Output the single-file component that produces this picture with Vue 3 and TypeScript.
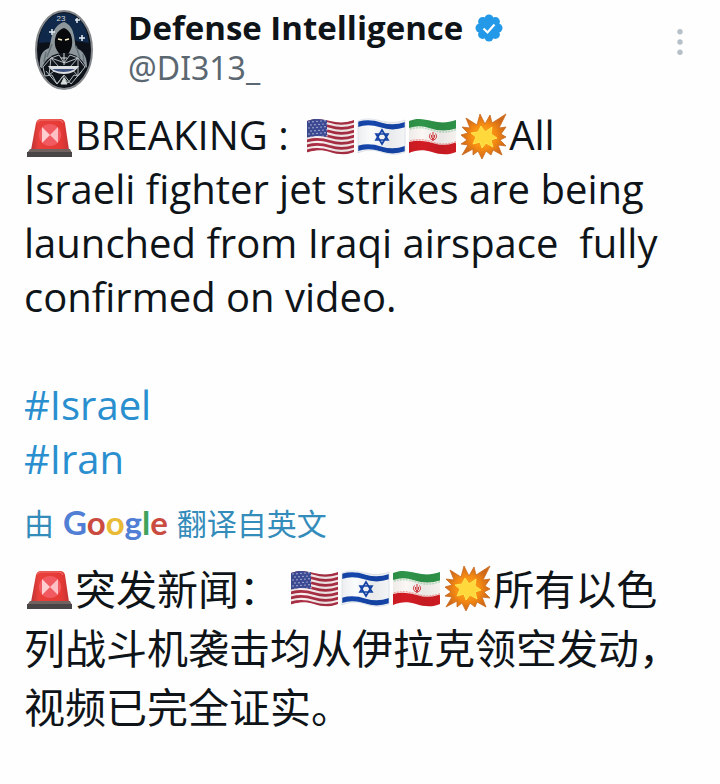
<script setup lang="ts">
type EmojiName = 'siren' | 'us' | 'il' | 'ir' | 'burst'

interface Emoji {
  name: EmojiName
  label: string
}

const siren: Emoji = { name: 'siren', label: 'Siren' }
const strip: Emoji[] = [
  { name: 'us', label: 'United States' },
  { name: 'il', label: 'Israel' },
  { name: 'ir', label: 'Iran' },
  { name: 'burst', label: 'Collision' },
]

const hashtags: string[] = ['Israel', 'Iran']

// One waving band of a flag, with its middle line starting at height y.
const wave = (y: number): string => `M0 ${y}c8-3 16-3 25 0s17 2.500 26-1`

const redStripes: number[] = [0, 1, 2, 3, 4, 5, 6].map((i) => 11.5 + i * 5)
const stars: { x: number; y: number }[] = []
for (let row = 0; row < 6; row++) {
  for (let col = 0; col < 5; col++) {
    stars.push({ x: 4 + col * 4 + (row % 2) * 2, y: 12 + row * 3 - col * 0.3 })
  }
}
</script>

<template>
  <svg class="defs" aria-hidden="true">
    <defs>
      <clipPath id="flag-shape">
        <path d="M2 11c8-3.500 15-2 23 0s16 2 24-1v32c-8 3.500-16 2.500-24 0s-15-2.500-23 1z" />
      </clipPath>
      <linearGradient id="flag-shade" x1="0" x2="1" y1="0" y2="0">
        <stop offset="0" stop-color="#000" stop-opacity=".06" />
        <stop offset=".3" stop-color="#000" stop-opacity="0" />
        <stop offset=".65" stop-color="#000" stop-opacity=".07" />
        <stop offset="1" stop-color="#000" stop-opacity=".02" />
      </linearGradient>
      <linearGradient id="dome" x1="0" x2="1" y1="0" y2="0">
        <stop offset="0" stop-color="#bd3334" />
        <stop offset=".2" stop-color="#e9403b" />
        <stop offset=".8" stop-color="#e53935" />
        <stop offset="1" stop-color="#c43335" />
      </linearGradient>
      <radialGradient id="blast">
        <stop offset="0" stop-color="#ffb51c" />
        <stop offset=".55" stop-color="#f58b12" />
        <stop offset="1" stop-color="#cf6819" />
      </radialGradient>
      <symbol id="siren" viewBox="0 0 51 51">
        <path d="M7 40l5-27q1-4 5-4h19q4 0 5 4l4 27z" fill="url(#dome)" />
        <path d="M13 13q1-3 4-3h18q3 0 4 3" fill="none" stroke="#ef7771" stroke-width="1" />
        <circle cx="26" cy="25" r="11" fill="#f05a60" />
        <path d="M18 17l8 8-8 8z" fill="#ffced0" />
        <path d="M34 17l-8 8 8 8z" fill="#ffc0c5" />
        <path d="M6 39h40l2 4H3z" fill="#716260" />
        <path d="M3 42h45v5H3z" fill="#494445" />
      </symbol>
      <symbol id="us" viewBox="0 0 51 51">
        <g clip-path="url(#flag-shape)">
          <path d="M0 0h51v51H0z" fill="#f9efef" />
          <path v-for="y in redStripes" :key="y" :d="wave(y)" fill="none" stroke="#ac2f45" stroke-width="2.700" />
          <path d="M0 5h22v22c-8-2-14-1-22 1z" fill="#3d4b95" />
          <circle v-for="(s, i) in stars" :key="i" :cx="s.x" :cy="s.y" r=".7" fill="#d5d9ef" />
          <path d="M0 0h51v51H0z" fill="url(#flag-shade)" />
        </g>
      </symbol>
      <symbol id="il" viewBox="0 0 51 51">
        <g clip-path="url(#flag-shape)">
          <path d="M0 0h51v51H0z" fill="#fafbfd" />
          <path :d="wave(15)" fill="none" stroke="#1546ac" stroke-width="5" />
          <path :d="wave(39)" fill="none" stroke="#1546ac" stroke-width="5" />
          <path d="M26 20l6 10H20zM26 34l-6-10h12z" fill="none" stroke="#1546ac" stroke-width="1.700" />
          <path d="M0 0h51v51H0z" fill="url(#flag-shade)" />
        </g>
        <path d="M2 11c8-3.500 15-2 23 0s16 2 24-1v32c-8 3.500-16 2.500-24 0s-15-2.500-23 1z" fill="none" stroke="#ccd3df" stroke-width=".6" />
      </symbol>
      <symbol id="ir" viewBox="0 0 51 51">
        <g clip-path="url(#flag-shape)">
          <path d="M0 0h51v51H0z" fill="#fbf7f5" />
          <path :d="wave(12)" fill="none" stroke="#2f9549" stroke-width="13" />
          <path :d="wave(40)" fill="none" stroke="#d31c24" stroke-width="14" />
          <path :d="wave(20)" fill="none" stroke="#b7dec0" stroke-width="1.500" stroke-dasharray="2 1" />
          <path :d="wave(32)" fill="none" stroke="#f2aaa9" stroke-width="1.500" stroke-dasharray="2 1" />
          <path d="M26 22v9M23.500 23.500c-2 3-1 6 2.500 6.500 3.500-.5 4.500-3.500 2.500-6.500M24.500 25q-1 3 1.500 4 2.500-1 1.500-4" fill="none" stroke="#d22f33" stroke-width="1" />
          <path d="M0 0h51v51H0z" fill="url(#flag-shade)" />
        </g>
      </symbol>
      <symbol id="burst" viewBox="0 0 51 51">
        <path d="M22 4l5 10 5-9 2 8 14-9-7 14 7-1-5 7 5 3-6 3 6 6-8-1 4 10-9-5-2 5-5-4-4 8-4-8-5 4v-6l-11 6 6-10-7-1 6-4-6-5 7-2-6-6 8 1-4-10 11 7z" fill="url(#blast)" stroke="#c9691d" stroke-width=".8" />
        <path d="M23 16l4 6 7-5-1 7 6 4-6 2 2 7-7-4-4 5-2-6-7 2 3-7-5-4 7-1z" fill="#ffd83b" stroke="#ffe451" stroke-width="1" />
      </symbol>
    </defs>
  </svg>

  <article class="post">
    <header class="head">
      <svg class="avatar" viewBox="0 0 60 82" role="img" aria-label="Defense Intelligence emblem">
        <ellipse cx="30" cy="41" rx="28" ry="39" fill="#0c1119" stroke="#85898c" stroke-width="2" />
        <path d="M5 34C6 15 17 4 30 4s23 11 25 30l-13-2-12-16-13 17z" fill="#10294a" />
        <path d="M6 58c-1-12 3-17 9-19 3-8 2-22 15-26 11 4 10 17 12 26 8 3 11 9 11 19l-10 7H16z" fill="#8d979b" />
        <path d="M21 36c-1-8 2-15 9-17 6 2 9 9 8 17-1 6-4 10-8 11-4-1-8-5-9-11z" fill="#07090d" />
        <path d="M18 35l-5 13M42 37l4 12M12 43l-2 10M49 45l1 8" stroke="#647077" stroke-width="1.500" />
        <path d="M24 30l4 1M31 31l4-1" stroke="#fff3ca" stroke-width="1.500" />
        <path d="M8 59c3-9 11-15 22-15s19 6 22 15c-4 12-11 19-22 19S12 71 8 59z" fill="#10151b" />
        <path d="M9 58l8-9 8-3 5 8 6-8 8 3 7 9-7 9-4-1-6 8-5-7-6 8-5-9-7 1zM17 49l-2 17 10-8-8-9 14 5 13-5-8 9 8 9V49M12 62l11 13 7-9 7 9 11-13" fill="none" stroke="#b3bcbe" stroke-width="1" />
        <path d="M14 57h31c-3 5-8 8-15 8s-13-3-16-8z" fill="#dce0e2" />
        <path d="M18 60h23c-6 4-17 4-23 0z" fill="#3e527d" />
        <path d="M30 44v12M27 49h6M27 75l3-6 3 6z" fill="#d7dddd" stroke="#d7dddd" stroke-width="1" />
        <path d="M43 9v5M41 11h5M18 20v6M15 23h6M48 26v6M45 29h6" stroke="#e5edf2" stroke-width="1.500" />
        <text x="27" y="12" text-anchor="middle" class="avatar-number">23</text>
      </svg>
      <div class="identity">
        <div class="name-row">
          <span class="name">Defense Intelligence</span>
          <svg class="badge" viewBox="0 0 28 28" role="img" aria-label="Verified account">
            <g fill="#2499e8">
              <circle cx="14" cy="14" r="11" />
              <circle cx="14" cy="5" r="4.500" />
              <circle cx="20.400" cy="7.600" r="4.500" />
              <circle cx="23" cy="14" r="4.500" />
              <circle cx="20.400" cy="20.400" r="4.500" />
              <circle cx="14" cy="23" r="4.500" />
              <circle cx="7.600" cy="20.400" r="4.500" />
              <circle cx="5" cy="14" r="4.500" />
              <circle cx="7.600" cy="7.600" r="4.500" />
            </g>
            <path d="M8.500 14.500l4 4 7-8" fill="none" stroke="#fff" stroke-width="2.200" />
          </svg>
        </div>
        <span class="handle">@DI313_</span>
      </div>
      <button class="more" type="button" aria-label="More options">
        <svg viewBox="0 0 6 26" aria-hidden="true">
          <circle cx="3" cy="3.500" r="2.500" />
          <circle cx="3" cy="13" r="2.500" />
          <circle cx="3" cy="22.500" r="2.500" />
        </svg>
      </button>
    </header>

    <p class="body">
      <svg class="emoji" role="img" :aria-label="siren.label"><use href="#siren" /></svg>BREAKING : <span class="strip"><svg v-for="e in strip" :key="e.name" class="emoji" role="img" :aria-label="e.label"><use :href="'#' + e.name" /></svg></span>All<br>
      Israeli fighter jet strikes are being<br>
      launched from Iraqi airspace&nbsp; fully<br>
      confirmed on video.
    </p>
    <p class="tags">
      <a v-for="tag in hashtags" :key="tag" :href="'#' + tag">#{{ tag }}</a>
    </p>

    <p class="source">
      <span>由</span>
      <span class="google"><span class="blue">G</span><span class="red">o</span><span class="yellow">o</span><span class="blue">g</span><span class="green">l</span><span class="red">e</span></span>
      <span>翻译自英文</span>
    </p>

    <p class="translation" lang="zh-CN">
      <svg class="emoji" role="img" :aria-label="siren.label"><use href="#siren" /></svg>突发新闻： <svg v-for="e in strip" :key="e.name" class="emoji" role="img" :aria-label="e.label"><use :href="'#' + e.name" /></svg>所有以色<br>列战斗机袭击均从伊拉克领空发动，<br>视频已完全证实。
    </p>
  </article>
</template>

<style>
body {
  margin: 0;
  background: #fefefe;
}
</style>

<style scoped>
.defs {
  position: absolute;
  width: 0;
  height: 0;
}

.post {
  padding: 8px 24px 40px;
  color: #0f1419;
  font-family: "Open Sans", "Noto Sans CJK SC", sans-serif;
}

.head {
  display: flex;
  align-items: flex-start;
}

.avatar {
  width: 60px;
  height: 82px;
  margin: 1px 34px 0 10px;
  flex: none;
}

.avatar-number {
  fill: #d2d9df;
  font: 400 8px "Liberation Sans", sans-serif;
}

.identity {
  display: flex;
  flex: 1;
  flex-direction: column;
}

.name-row {
  display: flex;
  align-items: center;
  gap: 12px;
  height: 40px;
}

.name {
  font-size: 33px;
  font-weight: 700;
  line-height: 40px;
  white-space: nowrap;
}

.badge {
  width: 28px;
  height: 28px;
  flex: none;
}

.handle {
  color: #5b6871;
  font-family: "Noto Sans", sans-serif;
  font-size: 32px;
  line-height: 40px;
}

.more {
  display: flex;
  margin: 20px 12px 0 0;
  padding: 0;
  border: 0;
  background: none;
}

.more svg {
  width: 8px;
  height: 28px;
  fill: #b5c0c8;
}

.body,
.tags,
.translation {
  margin: 0;
  font-size: 40px;
  line-height: 54px;
  white-space: nowrap;
}

.body {
  margin-top: 17px;
}

.emoji {
  width: 51px;
  height: 51px;
  vertical-align: -11px;
}

.strip {
  margin-left: 6px;
}

.tags {
  display: flex;
  flex-direction: column;
  align-items: flex-start;
  margin-top: 54px;
}

.tags a {
  color: #2a8fcf;
  text-decoration: none;
}

.source {
  display: flex;
  align-items: baseline;
  gap: 9px;
  margin: 10px 0;
  color: #348cbb;
  font-family: "Noto Sans CJK SC", sans-serif;
  font-size: 30px;
  line-height: 52px;
}

.google {
  font-family: Lato, sans-serif;
  font-size: 33px;
  font-weight: 700;
}

.blue { color: #517fd5; }
.red { color: #ca4b40; }
.yellow { color: #e9ba35; }
.green { color: #41a25b; }

.translation {
  font-family: "Noto Sans CJK SC", sans-serif;
  font-size: 41px;
  line-height: 59px;
}

.translation .emoji {
  vertical-align: -8px;
}
</style>
